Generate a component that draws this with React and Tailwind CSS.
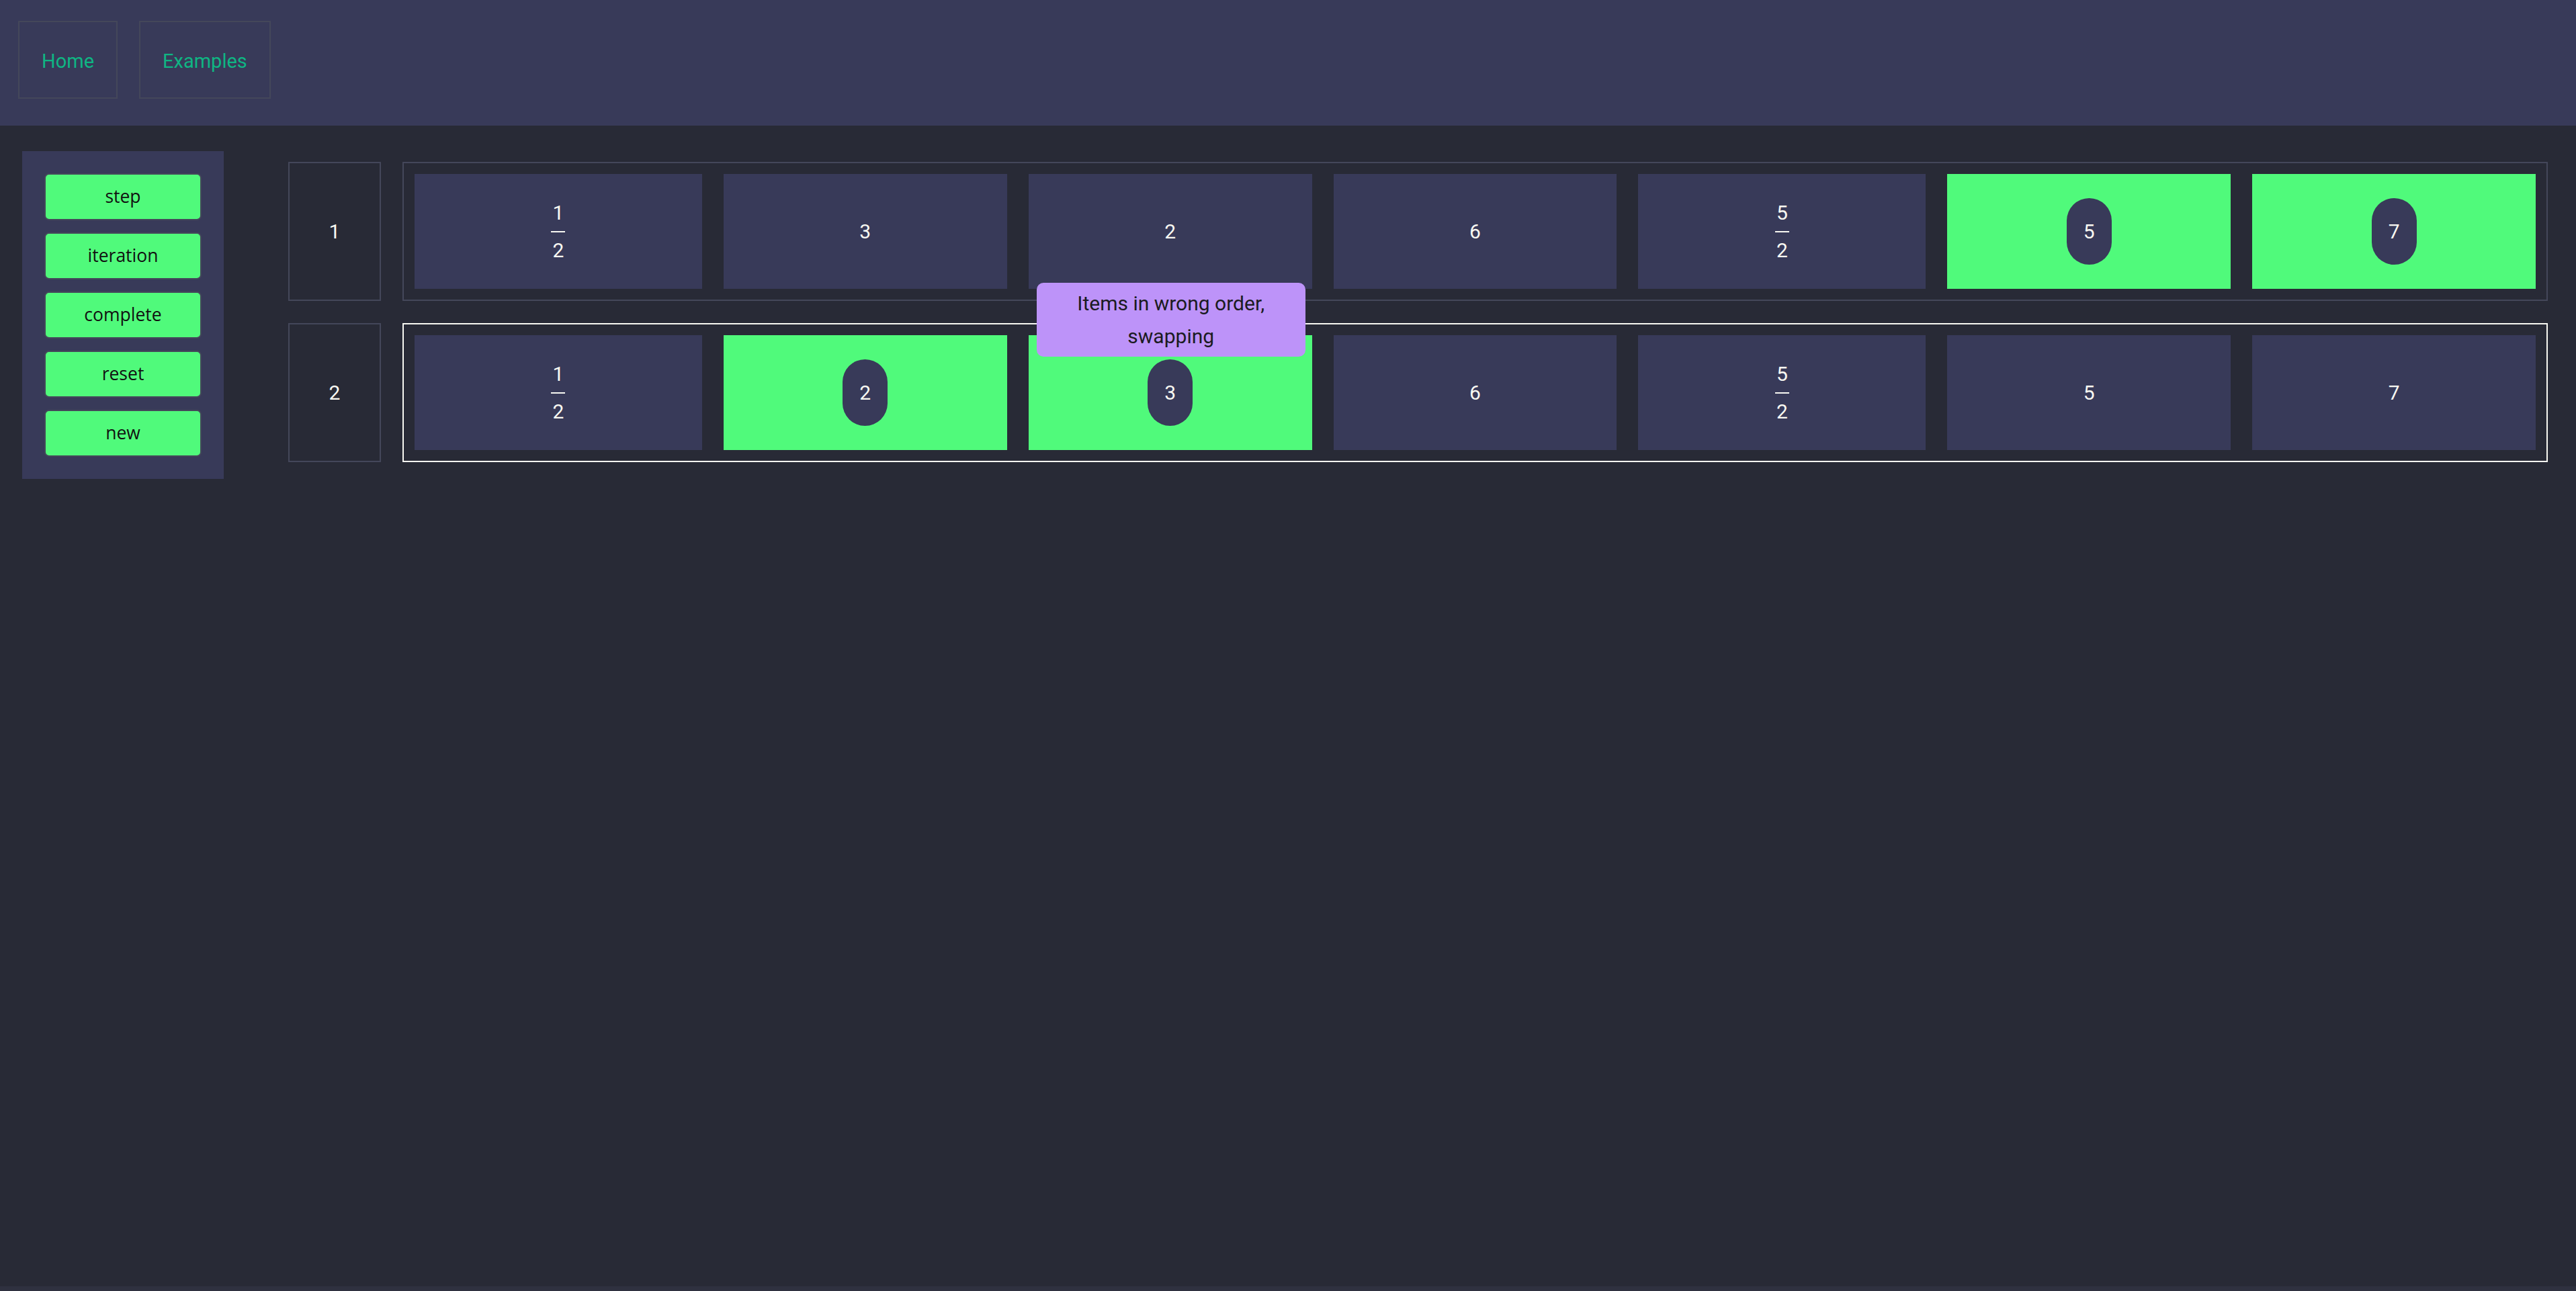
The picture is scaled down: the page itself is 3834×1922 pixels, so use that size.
const ROWS = [
  {
    id: 1,
    active: false,
    items: [
      { frac: [1, 2] },
      { v: 3 },
      { v: 2 },
      { v: 6 },
      { frac: [5, 2] },
      { v: 5, done: true },
      { v: 7, done: true },
    ],
  },
  {
    id: 2,
    active: true,
    items: [
      { frac: [1, 2] },
      { v: 2, swap: true },
      { v: 3, swap: true, tip: true },
      { v: 6 },
      { frac: [5, 2] },
      { v: 5 },
      { v: 7 },
    ],
  },
];

const BUTTONS = ['step', 'iteration', 'complete', 'reset', 'new'];

function Fraction({ n, d }) {
  return (
    <div className="flex flex-col items-center">
      <span className="leading-[36px]">{n}</span>
      <span className="my-[9px] h-[2px] w-[21px] bg-[#f8f8f2]" />
      <span className="leading-[36px]">{d}</span>
    </div>
  );
}

function Cell({ item }) {
  const green = item.done || item.swap;
  return (
    <div
      className={
        (item.frac ? 'flex-[428_1_0%] ' : 'flex-[422_1_0%] ') +
        (green ? 'bg-[#50fa7b] ' : 'bg-[#383a59] ') +
        'relative min-w-0 flex items-center justify-center'
      }
    >
      {item.frac ? (
        <Fraction n={item.frac[0]} d={item.frac[1]} />
      ) : green ? (
        <div className="w-[67px] h-[99px] rounded-full bg-[#383a59] flex items-center justify-center">
          {item.v}
        </div>
      ) : (
        <span>{item.v}</span>
      )}
      {item.tip && (
        <div className="absolute z-10 top-[-78px] left-[12px] w-[400px] h-[110px] rounded-[10px] bg-[#bd93f9] text-[#1b1b22] flex items-center justify-center text-center px-[20px] leading-[49px]">
          Items in wrong order, swapping
        </div>
      )}
    </div>
  );
}

export default function App() {
  return (
    <div className="min-h-screen flex flex-col bg-[#282a36] font-['Roboto',sans-serif] text-[30px] text-[#f8f8f2]">
      {/* top nav */}
      <header className="h-[187px] bg-[#383a59] flex gap-[32px] pl-[27px] pt-[31px] text-[29px]">
        <a className="h-[116px] px-[33px] pt-[5px] border-2 border-[#44475a] flex items-center text-[#0fb583]">Home</a>
        <a className="h-[116px] px-[33px] pt-[5px] border-2 border-[#44475a] flex items-center text-[#0fb583]">Examples</a>
      </header>

      <div className="flex-1 flex items-start pl-[33px] pt-[38px] pr-[42px]">
        {/* controls */}
        <aside className="w-[300px] bg-[#383a59] p-[33px] flex flex-col gap-[18px]">
          {BUTTONS.map((b) => (
            <button
              key={b}
              className="h-[70px] rounded-[7px] border-2 border-[#44475a] bg-[#50fa7b] text-[#111] text-[26.5px] font-['Open_Sans',sans-serif]"
            >
              {b}
            </button>
          ))}
        </aside>

        {/* sort steps */}
        <main className="ml-[96px] flex-1 pt-[16px] flex flex-col gap-[33px]">
          {ROWS.map((row) => (
            <div key={row.id} className="h-[207px] flex gap-[32px]">
              <div className="w-[138px] border-2 border-[#44475a] flex items-center justify-center">{row.id}</div>
              <div
                className={
                  (row.active ? 'border-[#f8f8f2] ' : 'border-[#44475a] ') +
                  'flex-1 border-2 p-[16px] flex gap-[32px]'
                }
              >
                {row.items.map((it, i) => (
                  <Cell key={i} item={it} />
                ))}
              </div>
            </div>
          ))}
        </main>
      </div>

      <footer className="h-[7px] bg-[#2f3140]" />
    </div>
  );
}
